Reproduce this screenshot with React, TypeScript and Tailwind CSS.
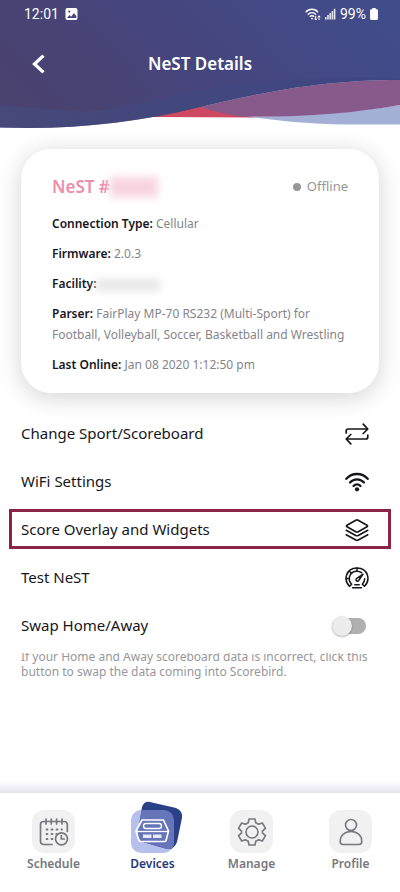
import { useState } from "react";
import type { ReactNode } from "react";

const details = [
  { label: "Connection Type:", value: "Cellular" },
  { label: "Firmware:", value: "2.0.3" },
  { label: "Facility:", value: "", hidden: true },
  {
    label: "Parser:",
    value: "FairPlay MP-70 RS232 (Multi-Sport) for Football, Volleyball, Soccer, Basketball and Wrestling",
  },
  { label: "Last Online:", value: "Jan 08 2020 1:12:50 pm" },
];

function Waves() {
  return (
    <svg
      className="absolute inset-0 h-full w-full"
      viewBox="0 0 400 129"
      preserveAspectRatio="none"
      aria-hidden="true"
    >
      <defs>
        <linearGradient id="sky" x1="0" y1="0.6" x2="1" y2="0.3">
          <stop offset="0" stopColor="#4a426f" />
          <stop offset="0.45" stopColor="#46457c" />
          <stop offset="1" stopColor="#414c8b" />
        </linearGradient>
        <linearGradient id="deep" x1="0" y1="0" x2="1" y2="0">
          <stop offset="0" stopColor="#434d80" />
          <stop offset="1" stopColor="#3b4480" />
        </linearGradient>
      </defs>
      <path d="M250 117 C310 116 355 112 400 105 V124.5 H345 C310 124 280 121 250 117Z" fill="#a3afd4" />
      <path d="M150 117 L200 106 L255 117.5 Z" fill="#cf4862" />
      <path d="M200 107 C265 92 320 80 400 80 V105 C350 114 290 118 240 116.5 C225 114 212 111 200 107Z" fill="#875a8b" />
      <path d="M0 0 H400 V80 C320 80 265 92 200 107 C135 123 70 130 0 127.5 Z" fill="url(#sky)" />
      <path d="M0 105 C30 108 60 110 85 112 C130 108 165 96 200 90 C270 78 335 76 400 78 V80 C320 80 265 92 200 107 C135 123 70 130 0 127.5Z" fill="url(#deep)" opacity="0.6" />
    </svg>
  );
}

function StatusBar() {
  return (
    <div className="flex h-7 items-center justify-between pr-[22px] pl-6 font-['Roboto',sans-serif] text-sm">
      <div className="flex items-center gap-[6px]">
        <span>12:01</span>
        <svg width="13" height="12" viewBox="0 0 13 12" aria-hidden="true">
          <rect x="0.5" width="12" height="12" rx="2" fill="white" />
          <path d="M2 10 L4.5 7 L6.2 8.8 L9 5 L11.3 8.2 V10Z" fill="#46457a" />
          <circle cx="4.3" cy="3.6" r="1.1" fill="#46457a" />
        </svg>
      </div>
      <div className="flex items-center gap-1">
        <svg width="16" height="13" viewBox="0 0 16 13" fill="none" stroke="white" aria-hidden="true">
          <path d="M0.7 4.2 C4 0.3 10 0.3 13 4.2" strokeWidth="1.4" />
          <path d="M2.8 6.6 C5 4 9 4 11 6.6" strokeWidth="1.4" />
          <path d="M4.7 8.8 C6 7.4 8 7.4 9.2 8.8" strokeWidth="1.4" />
          <circle cx="7" cy="10.6" r="0.9" fill="white" stroke="none" />
          <path d="M10.7 7.8 V12 M9.4 10.6 L10.7 12 L12 10.6 M14 12 V7.8 M12.8 9.2 L14 7.8 L15.3 9.2" strokeWidth="1" />
        </svg>
        <svg width="11" height="12" viewBox="0 0 11 12" fill="white" aria-hidden="true">
          <path d="M0 9h1.6v2.5H0zM2.2 7h1.6v4.5H2.2zM4.4 5H6v6.5H4.4zM6.6 3h1.6v8.5H6.6zM8.8 0.8h1.6v10.7H8.8z" opacity="0.85" />
        </svg>
        <span>99%</span>
        <svg width="8" height="12" viewBox="0 0 8 12" fill="white" aria-hidden="true">
          <path d="M2.3 0h3.4v1.3h1A1.3 1.3 0 0 1 8 2.6v8A1.4 1.4 0 0 1 6.6 12H1.4A1.4 1.4 0 0 1 0 10.6v-8A1.3 1.3 0 0 1 1.3 1.3h1z" />
        </svg>
      </div>
    </div>
  );
}

function SwapIcon() {
  return (
    <svg width="24" height="22" viewBox="0 0 24 22" fill="none" stroke="#16161d" strokeWidth="1.7" strokeLinecap="round" strokeLinejoin="round">
      <path d="M1.2 10 V8 Q1.2 6 3.2 6 H22.5 M18.2 1.2 L22.8 6 L18.2 10.5" />
      <path d="M22.8 12 V14 Q22.8 16 20.8 16 H1.5 M5.8 11.5 L1.2 16 L5.8 20.8" />
    </svg>
  );
}

function WifiIcon() {
  return (
    <svg width="24" height="20" viewBox="0 0 24 20" fill="none" stroke="#16161d" strokeWidth="2.3" strokeLinecap="round">
      <path d="M1.3 6.8 C7 0.4 17 0.4 22.7 6.8" />
      <path d="M5 10.5 C9 6.2 15 6.2 19 10.5" />
      <path d="M8.5 14 C10.5 11.8 13.5 11.8 15.5 14" />
      <circle cx="12" cy="17.3" r="2.1" fill="#16161d" stroke="none" />
    </svg>
  );
}

function LayersIcon() {
  return (
    <svg width="24" height="23" viewBox="0 0 24 23" fill="none" stroke="#16161d" strokeWidth="1.6" strokeLinecap="round" strokeLinejoin="round">
      <path d="M10.8 1.2 Q12 0.6 13.2 1.2 L22 6.2 Q23.2 7 22 7.8 L13.2 12.8 Q12 13.4 10.8 12.8 L2 7.8 Q0.8 7 2 6.2Z" />
      <path d="M1.2 11.3 L10.8 16.5 Q12 17.1 13.2 16.5 L22.8 11.3" />
      <path d="M1.2 15.8 L10.8 21 Q12 21.6 13.2 21 L22.8 15.8" />
    </svg>
  );
}

function GaugeIcon() {
  return (
    <svg width="24" height="22" viewBox="0 0 24 22" fill="none" stroke="#16161d" strokeWidth="1.5" strokeLinecap="round" strokeLinejoin="round">
      <path d="M4.5 19.3 C-1.5 13.5 0.3 1 12 0.9 C23.7 1 25.5 13.5 19.5 19.3 L17.3 17.2 C18.8 15.7 19.7 13.8 19.7 11.8" />
      <path d="M4.5 19.3 L6.7 17.2 C1.9 12.3 4.6 4.3 12 4.3 C13.8 4.3 15.3 4.8 16.6 5.7" />
      <path d="M12 1 V4.2 M4.7 4.5 L6.7 6.5 M1 11.5 H4.2" />
      <path d="M18 7.2 L13.7 13.5 C12.5 15 10.2 13.4 11.2 11.8 Z" />
      <path d="M9.8 17.7 H14.2 M7.5 20.8 H16.5" />
    </svg>
  );
}

const actions = [
  { name: "Change Sport/Scoreboard", icon: <SwapIcon /> },
  { name: "WiFi Settings", icon: <WifiIcon /> },
  { name: "Score Overlay and Widgets", icon: <LayersIcon />, highlighted: true },
  { name: "Test NeST", icon: <GaugeIcon /> },
];

function ScheduleIcon() {
  return (
    <svg width="30" height="28" viewBox="0 0 30 28" fill="none" stroke="#77777e" strokeWidth="1.7" strokeLinecap="round">
      <path d="M13 26.5 H5 Q1.5 26.5 1.5 23 V6.5 Q1.5 3.5 5 3.5 H25 Q28.3 3.5 28.3 6.5 V13.5" />
      <path d="M7 1 V6 M12.3 1 V6 M17.6 1 V6 M23 1 V6" />
      <path d="M7.500 11.500h1M12.500 11.500h1M17.500 11.500h1M22.500 11.500h0.500M7.500 16h1M12.500 16h1M7.500 21h1M12.500 21h1M17.300 16h0.200" strokeWidth="1.8" />
      <circle cx="22.5" cy="20.8" r="6" />
      <path d="M22.3 17.5 V21 H25.3" />
    </svg>
  );
}

function DevicesIcon() {
  return (
    <svg className="overflow-visible" width="43" height="43" viewBox="0 0 43 43" fill="none">
      <defs>
        <clipPath id="tile">
          <rect width="43" height="43" rx="10" />
        </clipPath>
      </defs>
      <rect width="43" height="43" rx="10" fill="#b6c0ec" />
      <path d="M11 -3 Q13 -9 19 -8 L45 -2 Q52 1 51 8 L46 32 Q43 40 36 39 L12 32 Q6 29 7 22 Z" fill="#2b4187" />
      <path d="M11 -3 Q13 -9 19 -8 L45 -2 Q52 1 51 8 L46 32 Q43 40 36 39 L12 32 Q6 29 7 22 Z" fill="#6675b9" clipPath="url(#tile)" />
      <path d="M11 10 H32.5 L37.5 21 L35 30.5 Q34.7 31.5 33.5 31.5 H9.5 Q8.3 31.5 8 30.5 L5 21 Z" stroke="white" strokeWidth="1.7" strokeLinejoin="round" />
      <path d="M5.5 21.5 H37" stroke="white" strokeWidth="1.3" />
      <rect x="12.5" y="13.5" width="18" height="5" rx="2.5" stroke="white" strokeWidth="1.4" />
      <path d="M12 24.5h8.500v3.500H12zM22 24.500h8.500v3.500H22z" fill="white" opacity="0.85" />
    </svg>
  );
}

function ManageIcon() {
  return (
    <svg width="30" height="28" viewBox="0 0 30 28" fill="none" stroke="#77777e" strokeWidth="1.6" strokeLinejoin="round">
      <path d="M12 1 H18 L18.7 4.7 L21.5 6.3 L25.3 5 L28.5 10.3 L25.5 12.8 V15.2 L28.5 17.7 L25.3 23 L21.5 21.7 L18.7 23.3 L18 27 H12 L11.3 23.3 L8.5 21.7 L4.7 23 L1.5 17.7 L4.5 15.2 V12.8 L1.5 10.3 L4.7 5 L8.5 6.3 L11.3 4.7Z" />
      <circle cx="15" cy="14" r="6" />
    </svg>
  );
}

function ProfileIcon() {
  return (
    <svg width="24" height="28" viewBox="0 0 24 28" fill="none" stroke="#77777e" strokeWidth="1.6" strokeLinejoin="round">
      <circle cx="12" cy="7" r="5.5" />
      <path d="M4 26.5 Q1.2 26.5 1.2 23.5 C1.2 17.5 5.5 13.5 12 13.5 C18.5 13.5 22.8 17.5 22.8 23.5 Q22.8 26.5 20 26.5Z" />
    </svg>
  );
}

function NavItem({ label, active, children }: { label: string; active?: boolean; children: ReactNode }) {
  return (
    <a href="#" className="flex flex-col items-center gap-[2px]" aria-current={active ? "page" : undefined}>
      <span className={`flex size-[43px] items-center justify-center rounded-xl ${active ? "" : "bg-[#f1f1f1]"}`}>
        {children}
      </span>
      <span className={`text-xs leading-[18px] font-semibold ${active ? "text-[#26387a]" : "text-[#77777e]"}`}>
        {label}
      </span>
    </a>
  );
}

export default function App() {
  const [swapped, setSwapped] = useState(false);

  return (
    <div className="flex min-h-screen flex-col bg-white font-['Noto_Sans',sans-serif] text-[#16161d]">
      {/* Header */}
      <header className="relative h-[129px] text-white">
        <Waves />
        <div className="relative">
          <StatusBar />
          <div className="grid grid-cols-[1fr_auto_1fr] items-center px-8 pt-5">
            <button type="button" aria-label="Back" className="justify-self-start">
              <svg width="13" height="20" viewBox="0 0 13 20" fill="none" stroke="white" strokeWidth="3.3">
                <path d="M11.5 1.6 L2.5 10 L11.5 18.4" />
              </svg>
            </button>
            <h1 className="text-[17px] leading-8 font-semibold">NeST Details</h1>
          </div>
        </div>
      </header>

      <main className="grow px-[21px] pt-5">
        {/* Device card */}
        <section className="rounded-[30px] bg-white px-[31px] pt-[25px] pb-[18px] shadow-[0_4px_24px_rgba(0,0,0,0.18)]">
          <div className="flex items-center justify-between">
            <h2 className="flex items-center text-[17px] leading-[26px] font-semibold text-[#ee8dab]">
              NeST #<span className="h-5 w-12 bg-[#f8d3e0] blur-[4px]" />
            </h2>
            <span className="flex items-center gap-[6px] text-[13px] text-[#97979b]">
              <span className="size-2 rounded-full bg-[#97979b]" />
              Offline
            </span>
          </div>
          <div className="mt-[13px] flex flex-col gap-[9px] text-xs leading-[21px] text-[#85858a]">
            {details.map((item) => (
              <p key={item.label}>
                <b className="font-semibold text-[#16161d]">{item.label}</b>
                {item.hidden ? (
                  <span className="inline-block h-3 w-16 bg-[#e6e6e6] align-middle blur-[4px]" />
                ) : (
                  <> {item.value}</>
                )}
              </p>
            ))}
          </div>
        </section>

        {/* Actions */}
        <div className="mt-4">
          {actions.map((action) => (
            <button
              key={action.name}
              type="button"
              className="relative flex h-12 w-full items-center justify-between pr-[10px] text-left text-[15px]"
            >
              {action.name}
              <span className="pt-[2px]">{action.icon}</span>
              {action.highlighted && (
                <span className="absolute -inset-x-3 inset-y-1 border-3 border-[#8b2346]" />
              )}
            </button>
          ))}
          <label className="flex h-12 items-center justify-between pr-[13px] text-[15px]">
            Swap Home/Away
            <span className="pt-[2px]">
              <span className="relative flex h-[21px] w-[34px] items-center">
                <input
                  type="checkbox"
                  checked={swapped}
                  onChange={(e) => setSwapped(e.target.checked)}
                  className="peer h-4 w-full appearance-none rounded-full bg-[#b0b0b0]"
                />
                <span className="pointer-events-none absolute left-0 size-5 rounded-full bg-[#ececec] shadow-[0_1px_2px_rgba(0,0,0,0.3)] peer-checked:left-4" />
              </span>
            </span>
          </label>
          <p className="text-xs leading-[15px] text-[#97979b] [clip-path:inset(4px_0_0_0)]">
            If your Home and Away scoreboard data is incorrect, click this button to swap the data coming into Scorebird.
          </p>
        </div>
      </main>

      {/* Tab bar */}
      <div className="h-3 bg-gradient-to-b from-white to-[#e4e2ef]" />
      <nav className="grid grid-cols-4 bg-white pt-[17px] pb-[19px] pl-1">
        <NavItem label="Schedule">
          <ScheduleIcon />
        </NavItem>
        <NavItem label="Devices" active>
          <DevicesIcon />
        </NavItem>
        <NavItem label="Manage">
          <ManageIcon />
        </NavItem>
        <NavItem label="Profile">
          <ProfileIcon />
        </NavItem>
      </nav>
    </div>
  );
}
